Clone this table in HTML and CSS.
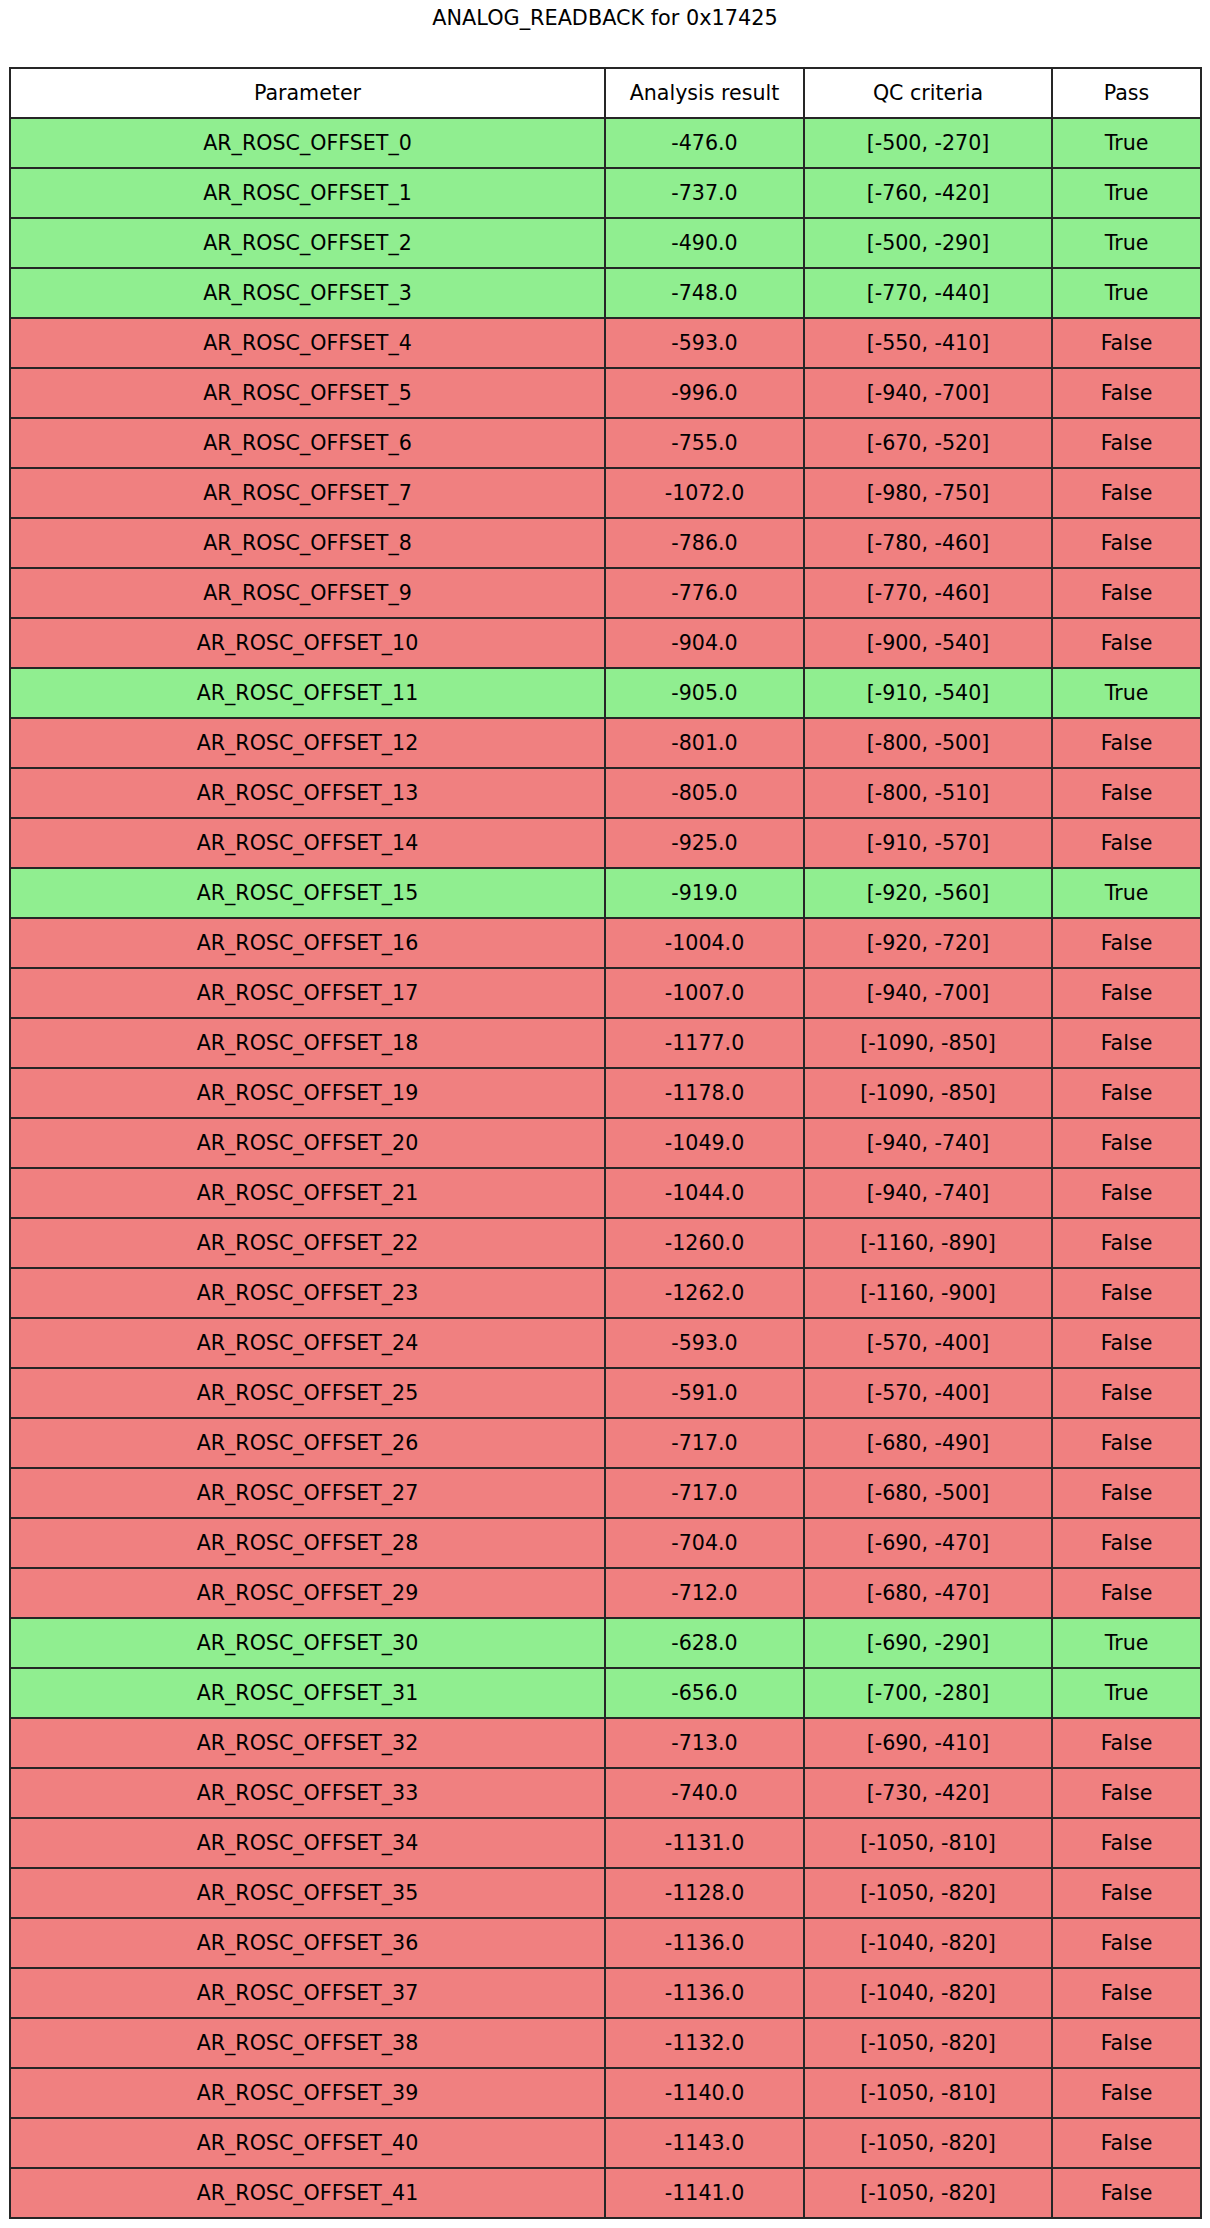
FILE: index.html
```html
<!DOCTYPE html>
<html>
<head>
<meta charset="utf-8">
<title>ANALOG_READBACK for 0x17425</title>
<link rel="stylesheet" href="styles.css">
</head>
<body>
<div class="title">ANALOG_READBACK for 0x17425</div>
<div class="table">
  <div class="row head"><div class="c c1">Parameter</div><div class="c">Analysis result</div><div class="c">QC criteria</div><div class="c">Pass</div></div>
  <div class="row ok"><div class="c c1">AR_ROSC_OFFSET_0</div><div class="c">-476.0</div><div class="c">[-500, -270]</div><div class="c">True</div></div>
  <div class="row ok"><div class="c c1">AR_ROSC_OFFSET_1</div><div class="c">-737.0</div><div class="c">[-760, -420]</div><div class="c">True</div></div>
  <div class="row ok"><div class="c c1">AR_ROSC_OFFSET_2</div><div class="c">-490.0</div><div class="c">[-500, -290]</div><div class="c">True</div></div>
  <div class="row ok"><div class="c c1">AR_ROSC_OFFSET_3</div><div class="c">-748.0</div><div class="c">[-770, -440]</div><div class="c">True</div></div>
  <div class="row bad"><div class="c c1">AR_ROSC_OFFSET_4</div><div class="c">-593.0</div><div class="c">[-550, -410]</div><div class="c">False</div></div>
  <div class="row bad"><div class="c c1">AR_ROSC_OFFSET_5</div><div class="c">-996.0</div><div class="c">[-940, -700]</div><div class="c">False</div></div>
  <div class="row bad"><div class="c c1">AR_ROSC_OFFSET_6</div><div class="c">-755.0</div><div class="c">[-670, -520]</div><div class="c">False</div></div>
  <div class="row bad"><div class="c c1">AR_ROSC_OFFSET_7</div><div class="c">-1072.0</div><div class="c">[-980, -750]</div><div class="c">False</div></div>
  <div class="row bad"><div class="c c1">AR_ROSC_OFFSET_8</div><div class="c">-786.0</div><div class="c">[-780, -460]</div><div class="c">False</div></div>
  <div class="row bad"><div class="c c1">AR_ROSC_OFFSET_9</div><div class="c">-776.0</div><div class="c">[-770, -460]</div><div class="c">False</div></div>
  <div class="row bad"><div class="c c1">AR_ROSC_OFFSET_10</div><div class="c">-904.0</div><div class="c">[-900, -540]</div><div class="c">False</div></div>
  <div class="row ok"><div class="c c1">AR_ROSC_OFFSET_11</div><div class="c">-905.0</div><div class="c">[-910, -540]</div><div class="c">True</div></div>
  <div class="row bad"><div class="c c1">AR_ROSC_OFFSET_12</div><div class="c">-801.0</div><div class="c">[-800, -500]</div><div class="c">False</div></div>
  <div class="row bad"><div class="c c1">AR_ROSC_OFFSET_13</div><div class="c">-805.0</div><div class="c">[-800, -510]</div><div class="c">False</div></div>
  <div class="row bad"><div class="c c1">AR_ROSC_OFFSET_14</div><div class="c">-925.0</div><div class="c">[-910, -570]</div><div class="c">False</div></div>
  <div class="row ok"><div class="c c1">AR_ROSC_OFFSET_15</div><div class="c">-919.0</div><div class="c">[-920, -560]</div><div class="c">True</div></div>
  <div class="row bad"><div class="c c1">AR_ROSC_OFFSET_16</div><div class="c">-1004.0</div><div class="c">[-920, -720]</div><div class="c">False</div></div>
  <div class="row bad"><div class="c c1">AR_ROSC_OFFSET_17</div><div class="c">-1007.0</div><div class="c">[-940, -700]</div><div class="c">False</div></div>
  <div class="row bad"><div class="c c1">AR_ROSC_OFFSET_18</div><div class="c">-1177.0</div><div class="c">[-1090, -850]</div><div class="c">False</div></div>
  <div class="row bad"><div class="c c1">AR_ROSC_OFFSET_19</div><div class="c">-1178.0</div><div class="c">[-1090, -850]</div><div class="c">False</div></div>
  <div class="row bad"><div class="c c1">AR_ROSC_OFFSET_20</div><div class="c">-1049.0</div><div class="c">[-940, -740]</div><div class="c">False</div></div>
  <div class="row bad"><div class="c c1">AR_ROSC_OFFSET_21</div><div class="c">-1044.0</div><div class="c">[-940, -740]</div><div class="c">False</div></div>
  <div class="row bad"><div class="c c1">AR_ROSC_OFFSET_22</div><div class="c">-1260.0</div><div class="c">[-1160, -890]</div><div class="c">False</div></div>
  <div class="row bad"><div class="c c1">AR_ROSC_OFFSET_23</div><div class="c">-1262.0</div><div class="c">[-1160, -900]</div><div class="c">False</div></div>
  <div class="row bad"><div class="c c1">AR_ROSC_OFFSET_24</div><div class="c">-593.0</div><div class="c">[-570, -400]</div><div class="c">False</div></div>
  <div class="row bad"><div class="c c1">AR_ROSC_OFFSET_25</div><div class="c">-591.0</div><div class="c">[-570, -400]</div><div class="c">False</div></div>
  <div class="row bad"><div class="c c1">AR_ROSC_OFFSET_26</div><div class="c">-717.0</div><div class="c">[-680, -490]</div><div class="c">False</div></div>
  <div class="row bad"><div class="c c1">AR_ROSC_OFFSET_27</div><div class="c">-717.0</div><div class="c">[-680, -500]</div><div class="c">False</div></div>
  <div class="row bad"><div class="c c1">AR_ROSC_OFFSET_28</div><div class="c">-704.0</div><div class="c">[-690, -470]</div><div class="c">False</div></div>
  <div class="row bad"><div class="c c1">AR_ROSC_OFFSET_29</div><div class="c">-712.0</div><div class="c">[-680, -470]</div><div class="c">False</div></div>
  <div class="row ok"><div class="c c1">AR_ROSC_OFFSET_30</div><div class="c">-628.0</div><div class="c">[-690, -290]</div><div class="c">True</div></div>
  <div class="row ok"><div class="c c1">AR_ROSC_OFFSET_31</div><div class="c">-656.0</div><div class="c">[-700, -280]</div><div class="c">True</div></div>
  <div class="row bad"><div class="c c1">AR_ROSC_OFFSET_32</div><div class="c">-713.0</div><div class="c">[-690, -410]</div><div class="c">False</div></div>
  <div class="row bad"><div class="c c1">AR_ROSC_OFFSET_33</div><div class="c">-740.0</div><div class="c">[-730, -420]</div><div class="c">False</div></div>
  <div class="row bad"><div class="c c1">AR_ROSC_OFFSET_34</div><div class="c">-1131.0</div><div class="c">[-1050, -810]</div><div class="c">False</div></div>
  <div class="row bad"><div class="c c1">AR_ROSC_OFFSET_35</div><div class="c">-1128.0</div><div class="c">[-1050, -820]</div><div class="c">False</div></div>
  <div class="row bad"><div class="c c1">AR_ROSC_OFFSET_36</div><div class="c">-1136.0</div><div class="c">[-1040, -820]</div><div class="c">False</div></div>
  <div class="row bad"><div class="c c1">AR_ROSC_OFFSET_37</div><div class="c">-1136.0</div><div class="c">[-1040, -820]</div><div class="c">False</div></div>
  <div class="row bad"><div class="c c1">AR_ROSC_OFFSET_38</div><div class="c">-1132.0</div><div class="c">[-1050, -820]</div><div class="c">False</div></div>
  <div class="row bad"><div class="c c1">AR_ROSC_OFFSET_39</div><div class="c">-1140.0</div><div class="c">[-1050, -810]</div><div class="c">False</div></div>
  <div class="row bad"><div class="c c1">AR_ROSC_OFFSET_40</div><div class="c">-1143.0</div><div class="c">[-1050, -820]</div><div class="c">False</div></div>
  <div class="row bad"><div class="c c1">AR_ROSC_OFFSET_41</div><div class="c">-1141.0</div><div class="c">[-1050, -820]</div><div class="c">False</div></div>
</div>
</body>
</html>
```

FILE: styles.css
```css
html, body {
  margin: 0;
  padding: 0;
  background: #ffffff;
}
body {
  font-family: "DejaVu Sans", sans-serif;
  font-size: 20.6px;
  color: #000000;
}
.title {
  box-sizing: border-box;
  height: 67px;
  padding-top: 6px;
  line-height: 24px;
  font-size: 20.8px;
  text-align: center;
}
.table {
  margin-left: 9px;
  width: 1193px;
}
.row {
  display: grid;
  grid-template-columns: 597px 199px 248px 149px;
  height: 50px;
}
.row.head {
  height: 52px;
  background: #ffffff;
}
.row.ok { background: #90ee90; }
.row.bad { background: #f08080; }
.c {
  box-sizing: border-box;
  display: flex;
  align-items: center;
  justify-content: center;
  line-height: 24px;
  border-right: 2px solid #262626;
  border-bottom: 2px solid #262626;
  white-space: nowrap;
}
.c1 {
  border-left: 2px solid #262626;
}
.head .c {
  border-top: 2px solid #262626;
}
```
